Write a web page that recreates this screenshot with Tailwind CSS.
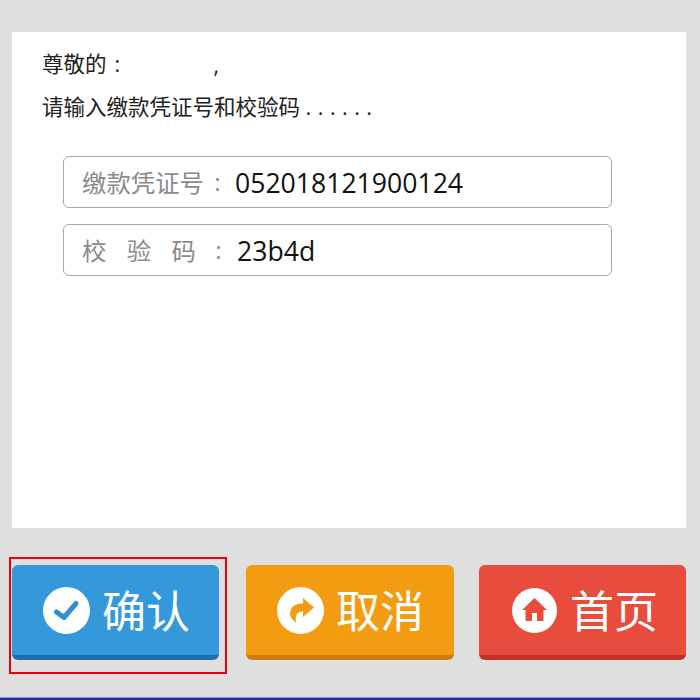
<!DOCTYPE html>
<html lang="zh-CN">
<head>
<meta charset="utf-8">
<script src="https://cdn.jsdelivr.net/npm/@tailwindcss/browser@4"></script>
</head>
<body class="m-0">
<div class="relative w-[700px] h-[700px] overflow-hidden bg-[#dfdfdf] font-['Open_Sans','Noto_Sans_CJK_SC',sans-serif] flex flex-col">
  <main class="mt-8 ml-3 w-[674px] h-[496px] bg-white shrink-0 flex flex-col">
    <p class="mt-[17px] ml-[30px] h-[30px] leading-[30px] text-[21.5px] text-[#222] flex">
      <span class="whitespace-pre">尊敬的</span><span class="ml-[8px] w-[99px]">:</span><span class="pt-[1px]">,</span>
    </p>
    <p class="mt-[13px] ml-[30px] h-[30px] leading-[30px] text-[21.5px] text-[#222] whitespace-nowrap">请输入缴款凭证号和校验码 <span class="tracking-[6.5px]">......</span></p>
    <div class="mt-[34px] ml-[51px] w-[549px] h-[52px] border border-[#a9a9a9] rounded-[6px] flex items-center">
      <span class="ml-[18px] text-[24.4px] text-[#8a8a8a] whitespace-nowrap pt-[2px]">缴款凭证号</span>
      <span class="w-[31px] pr-1 text-center text-[24.4px] text-[#8a8a8a]">:</span>
      <span class="text-[26.6px] text-[#111] pt-[3px]">052018121900124</span>
    </div>
    <div class="mt-[16px] ml-[51px] w-[549px] h-[52px] border border-[#a9a9a9] rounded-[6px] flex items-center">
      <span class="ml-[18px] w-[114px] text-[24.4px] text-[#8a8a8a] whitespace-nowrap flex justify-between pt-[2px]"><span>校</span><span>验</span><span>码</span></span>
      <span class="w-[41px] pl-1 text-center text-[24.4px] text-[#8a8a8a]">:</span>
      <span class="text-[26.6px] text-[#111] pt-[3px]">23b4d</span>
    </div>
  </main>
  <footer class="mt-[37px] ml-3 w-[674px] h-[95px] flex justify-between shrink-0">
    <button class="relative w-[207px] h-[95px] bg-[#3498db] rounded-[6px] border-b-[5px] border-[#1f6ea8] flex items-center text-white text-[44px]">
      <span class="absolute -left-[3px] -top-[8px] w-[218px] h-[117px] border-2 border-[#e8000f]"></span>
      <svg class="ml-[31px] w-[47px] h-[47px]" viewBox="0 0 47 47"><circle cx="23.5" cy="23.5" r="23.5" fill="#fff"/><path d="M13.5 25l7.500 5.500L33 16.500" fill="none" stroke="#2f8fd3" stroke-width="5" stroke-linecap="round" stroke-linejoin="round"/></svg>
      <span class="ml-[12px] leading-none pt-[2px]">确认</span>
    </button>
    <button class="w-[208px] h-[95px] ml-[27px] bg-[#f39c12] rounded-[6px] border-b-[5px] border-[#c87f0e] flex items-center text-white text-[44px]">
      <svg class="ml-[31px] w-[47px] h-[47px]" viewBox="0 0 47 47"><circle cx="23.500" cy="23.500" r="23.500" fill="#fff"/><path d="M26 11l11 9.500-11 9.500v-5.500c-5.500 0-8 3-7 11-6-4-7-9-5-13 2-5 7-6 12-6z" fill="#f39c12"/></svg>
      <span class="ml-[12px] leading-none pt-[2px]">取消</span>
    </button>
    <button class="w-[207px] h-[95px] ml-[25px] bg-[#e74c3c] rounded-[6px] border-b-[5px] border-[#c0302a] flex items-center text-white text-[44px]">
      <svg class="ml-[33px] w-[45px] h-[45px]" viewBox="0 0 45 45"><circle cx="22.500" cy="22.500" r="22.500" fill="#fff"/><path d="M22.500 10L35 22h-3.500v11H25v-8h-5v8h-6.500V22H10z" fill="#e74c3c"/></svg>
      <span class="ml-[13px] leading-none pt-[2px]">首页</span>
    </button>
  </footer>
  <div class="absolute left-0 right-0 bottom-0 h-[3px] border-t border-[#8f93c9] bg-[#2a2fa8]"></div>
</div>
</body>
</html>
